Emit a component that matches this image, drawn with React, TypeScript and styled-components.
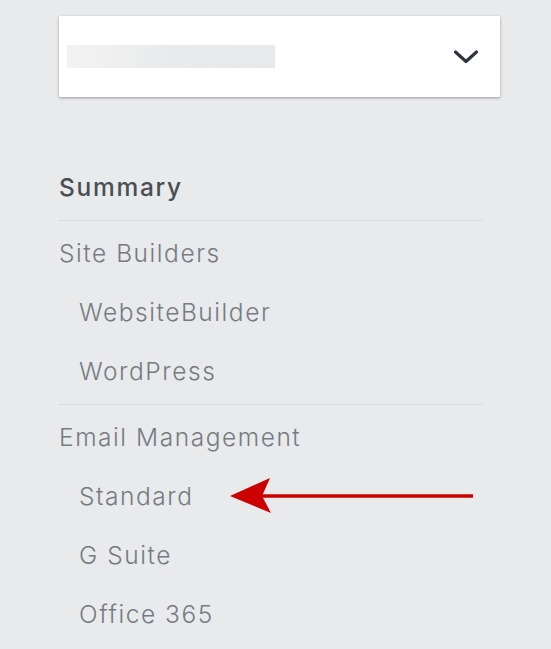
import React from "react";
import styled, { createGlobalStyle } from "styled-components";

const Global = createGlobalStyle`
  html, body { margin: 0; padding: 0; background: #e9eaec; }
  body { font-family: Inter, "DejaVu Sans", sans-serif; }
`;

const Page = styled.div`
  width: 551px;
  height: 649px;
  box-sizing: border-box;
  padding: 16px 0 0 59px;
  background: #e9eaec;
  overflow: hidden;
`;

const Select = styled.div`
  width: 441px;
  height: 81px;
  box-sizing: border-box;
  background: #ffffff;
  box-shadow: 0 1px 3px rgba(0, 0, 0, 0.35);
  border-radius: 1px;
  display: flex;
  align-items: center;
  justify-content: space-between;
  padding: 0 21px 0 8px;
`;

const Skeleton = styled.div`
  width: 208px;
  height: 23px;
  background: linear-gradient(90deg, #f3f3f3 0%, #e9eaeb 50%, #e8e9ea 100%);
`;

const Nav = styled.nav`
  width: 424px;
  margin-top: 60px;
`;

const Group = styled.div`
  padding-bottom: 4px;
  margin-bottom: 2px;
  border-bottom: 1px solid #dadbde;
  &:last-child { border-bottom: none; }
`;

const Item = styled.div<{ $sub?: boolean; $strong?: boolean }>`
  position: relative;
  height: 59px;
  display: flex;
  align-items: center;
  padding-left: ${(p) => (p.$sub ? "20px" : "0")};
  font-size: 24.5px;
  letter-spacing: ${(p) => (p.$strong ? "1.7px" : "1.55px")};
  font-weight: ${(p) => (p.$strong ? 500 : 300)};
  color: ${(p) => (p.$strong ? "#4a4e55" : "#767b83")};
`;

const Pointer = styled.svg`
  position: absolute;
  left: 170px;
  top: 11px;
`;

const Chevron = () => (
  <svg width="26" height="16" viewBox="0 0 26 16">
    <path d="M2.5 3 L13 12.5 L23.5 3" fill="none" stroke="#2f3540" strokeWidth="3.2" strokeLinecap="round" strokeLinejoin="round" />
  </svg>
);

const Arrow = () => (
  <Pointer width="248" height="38" viewBox="0 0 248 38">
    <line x1="30" y1="19" x2="244" y2="19" stroke="#cc0000" strokeWidth="3.5" />
    <path d="M1 19 L41 1 L33 19 L42 36 Z" fill="#cc0000" />
  </Pointer>
);

export default function App() {
  return (
    <Page>
      <Global />
      <Select>
        <Skeleton />
        <Chevron />
      </Select>
      <Nav>
        <Group>
          <Item $strong>Summary</Item>
        </Group>
        <Group>
          <Item>Site Builders</Item>
          <Item $sub>WebsiteBuilder</Item>
          <Item $sub>WordPress</Item>
        </Group>
        <Group>
          <Item>Email Management</Item>
          <Item $sub>
            Standard
            <Arrow />
          </Item>
          <Item $sub>G Suite</Item>
          <Item $sub>Office 365</Item>
        </Group>
      </Nav>
    </Page>
  );
}
